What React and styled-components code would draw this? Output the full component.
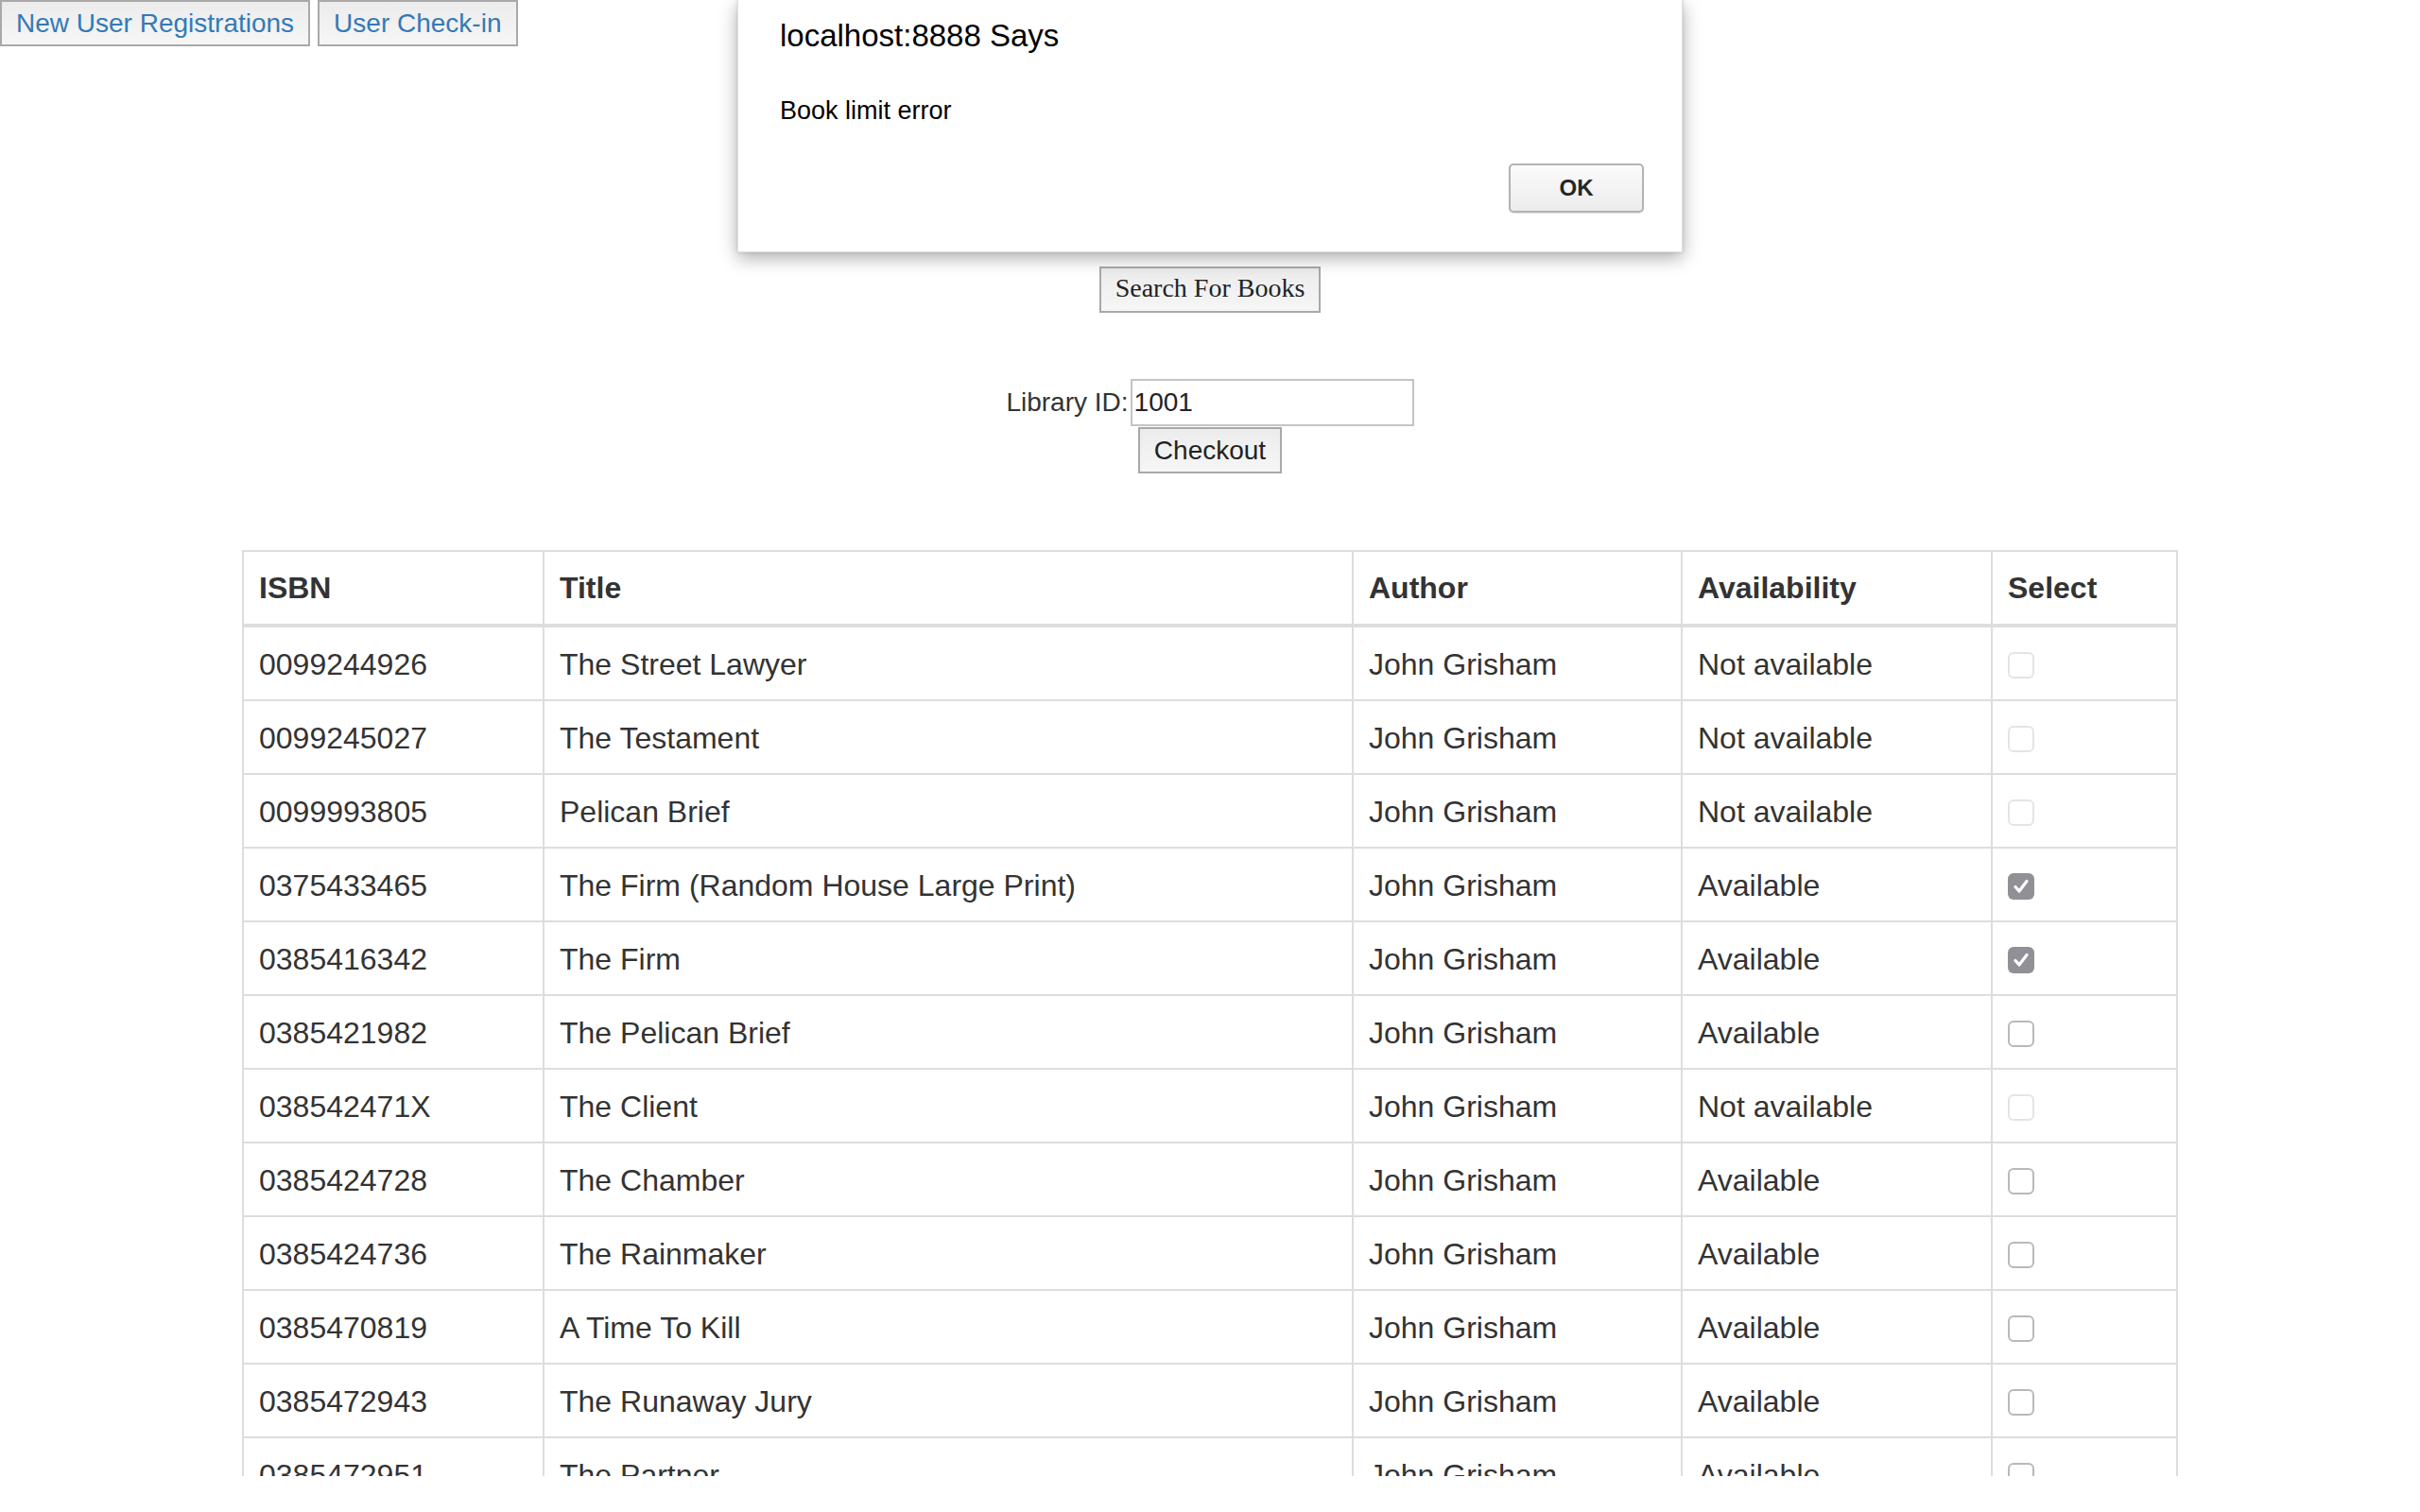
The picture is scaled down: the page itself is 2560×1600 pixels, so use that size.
import React from "react";
import styled, { createGlobalStyle } from "styled-components";

const GlobalStyle = createGlobalStyle`
  html, body {
    margin: 0;
    padding: 0;
    background: #ffffff;
  }
  body {
    font-family: "Liberation Sans", Arial, Helvetica, sans-serif;
    color: #333333;
  }
  * { box-sizing: border-box; }
`;

const Page = styled.div`
  position: relative;
  width: 2560px;
  height: 1562px;
  overflow: hidden;
  background: #ffffff;
`;

const NavBar = styled.nav`
  display: flex;
  gap: 8px;
  height: 49px;
`;

const baseButton = `
  height: 49px;
  border: 2px solid #a9a9a9;
  border-radius: 0;
  background: linear-gradient(to bottom, #ececec, #f6f6f6);
  margin: 0;
  cursor: pointer;
  white-space: nowrap;
`;

const NavButton = styled.button`
  ${baseButton}
  padding: 0 15px;
  font-family: "Liberation Sans", Arial, sans-serif;
  font-size: 28px;
  color: #337ab7;
`;

const Main = styled.main`
  display: flex;
  flex-direction: column;
  align-items: center;
  padding-top: 233px;
`;

const SearchButton = styled.button`
  ${baseButton}
  padding: 0 15px 3px;
  font-family: "Liberation Serif", "Times New Roman", serif;
  font-size: 28px;
  color: #222222;
`;

const CheckoutForm = styled.form`
  display: flex;
  flex-direction: column;
  align-items: center;
  margin-top: 70px;
`;

const FieldRow = styled.div`
  display: flex;
  align-items: center;
  gap: 2px;
`;

const Label = styled.label`
  font-size: 28px;
  color: #333333;
`;

const TextInput = styled.input`
  width: 300px;
  height: 50px;
  border: 2px solid #c4c4c4;
  padding: 0 2px;
  font-family: "Liberation Sans", Arial, sans-serif;
  font-size: 28px;
  color: #222222;
  outline: none;
`;

const CheckoutButton = styled.button`
  ${baseButton}
  margin-top: 1px;
  padding: 0 15px;
  font-family: "Liberation Sans", Arial, sans-serif;
  font-size: 28px;
  color: #222222;
`;

const TableWrap = styled.section`
  margin: 81px 256px 0;
`;

const Table = styled.table`
  width: 2048px;
  table-layout: fixed;
  border-collapse: separate;
  border-spacing: 0;
  border-top: 2px solid #dddddd;
  border-left: 2px solid #dddddd;
  font-size: 32px;
  color: #333333;
`;

const Th = styled.th`
  width: ${(p) => p.$w}px;
  padding: 16px;
  line-height: 44px;
  text-align: left;
  font-weight: bold;
  border-right: 2px solid #dddddd;
  border-bottom: 4px solid #dddddd;
  white-space: nowrap;
`;

const Td = styled.td`
  padding: 17px 16px 15px;
  line-height: 44px;
  text-align: left;
  vertical-align: middle;
  border-right: 2px solid #dddddd;
  border-bottom: 2px solid #dddddd;
  white-space: nowrap;
`;

const CheckBox = styled.span`
  display: inline-flex;
  align-items: center;
  justify-content: center;
  width: 28px;
  height: 28px;
  border-radius: 6px;
  vertical-align: middle;
  margin-top: -3px;
  background: ${(p) => (p.$checked ? "#909096" : "#ffffff")};
  border: ${(p) =>
    p.$checked
      ? "none"
      : p.$disabled
      ? "2px solid #e4e4e4"
      : "2px solid #b9b9b9"};
`;

const Dialog = styled.div`
  position: absolute;
  top: 0;
  left: 780px;
  width: 1000px;
  height: 267px;
  background: #ffffff;
  border: 1px solid rgba(0, 0, 0, 0.12);
  border-top: none;
  box-shadow: 0 6px 18px rgba(0, 0, 0, 0.32), 0 0 4px rgba(0, 0, 0, 0.12);
  padding: 18px 40px 41px 44px;
  display: flex;
  flex-direction: column;
  font-family: "Liberation Sans", Arial, sans-serif;
  color: #000000;
`;

const DialogTitle = styled.h1`
  margin: 0;
  font-size: 33px;
  font-weight: normal;
  line-height: 40px;
`;

const DialogText = styled.p`
  margin: 41px 0 0;
  font-size: 27px;
  line-height: 36px;
`;

const DialogActions = styled.div`
  display: flex;
  justify-content: flex-end;
  margin-top: auto;
`;

const OkButton = styled.button`
  width: 143px;
  height: 52px;
  border: 2px solid #b3b3b3;
  border-radius: 5px;
  background: linear-gradient(to bottom, #fbfbfb, #ececec);
  box-shadow: 0 1px 1px rgba(0, 0, 0, 0.12);
  font-family: "Liberation Sans", Arial, sans-serif;
  font-size: 24px;
  font-weight: bold;
  color: #262626;
  padding: 0;
`;

const Check = ({ checked, disabled }) => (
  <CheckBox $checked={checked} $disabled={disabled}>
    {checked && (
      <svg width="20" height="20" viewBox="0 0 20 20">
        <path
          d="M4 10.5 L8 15 L16 4.5"
          fill="none"
          stroke="#ffffff"
          strokeWidth="3.2"
          strokeLinecap="round"
          strokeLinejoin="round"
        />
      </svg>
    )}
  </CheckBox>
);

const books = [
  ["0099244926", "The Street Lawyer", "Not available", false],
  ["0099245027", "The Testament", "Not available", false],
  ["0099993805", "Pelican Brief", "Not available", false],
  ["0375433465", "The Firm (Random House Large Print)", "Available", true],
  ["0385416342", "The Firm", "Available", true],
  ["0385421982", "The Pelican Brief", "Available", false],
  ["038542471X", "The Client", "Not available", false],
  ["0385424728", "The Chamber", "Available", false],
  ["0385424736", "The Rainmaker", "Available", false],
  ["0385470819", "A Time To Kill", "Available", false],
  ["0385472943", "The Runaway Jury", "Available", false],
  ["0385472951", "The Partner", "Available", false],
  ["0385490992", "The Street Lawyer", "Available", false],
];

const columns = [
  ["ISBN", 318],
  ["Title", 856],
  ["Author", 348],
  ["Availability", 328],
  ["Select", 196],
];

export default function App() {
  return (
    <>
      <GlobalStyle />
      <Page>
        <NavBar>
          <NavButton type="button">New User Registrations</NavButton>
          <NavButton type="button">User Check-in</NavButton>
        </NavBar>

        <Main>
          <SearchButton type="button">Search For Books</SearchButton>
          <CheckoutForm onSubmit={(e) => e.preventDefault()}>
            <FieldRow>
              <Label htmlFor="libid">Library ID:</Label>
              <TextInput id="libid" defaultValue="1001" />
            </FieldRow>
            <CheckoutButton type="submit">Checkout</CheckoutButton>
          </CheckoutForm>
        </Main>

        <TableWrap>
          <Table>
            <thead>
              <tr>
                {columns.map(([name, w]) => (
                  <Th key={name} $w={w}>
                    {name}
                  </Th>
                ))}
              </tr>
            </thead>
            <tbody>
              {books.map(([isbn, title, avail, checked]) => (
                <tr key={isbn + title}>
                  <Td>{isbn}</Td>
                  <Td>{title}</Td>
                  <Td>John Grisham</Td>
                  <Td>{avail}</Td>
                  <Td>
                    <Check
                      checked={checked}
                      disabled={avail !== "Available"}
                    />
                  </Td>
                </tr>
              ))}
            </tbody>
          </Table>
        </TableWrap>

        <Dialog role="alertdialog">
          <DialogTitle>localhost:8888 Says</DialogTitle>
          <DialogText>Book limit error</DialogText>
          <DialogActions>
            <OkButton type="button">OK</OkButton>
          </DialogActions>
        </Dialog>
      </Page>
    </>
  );
}
